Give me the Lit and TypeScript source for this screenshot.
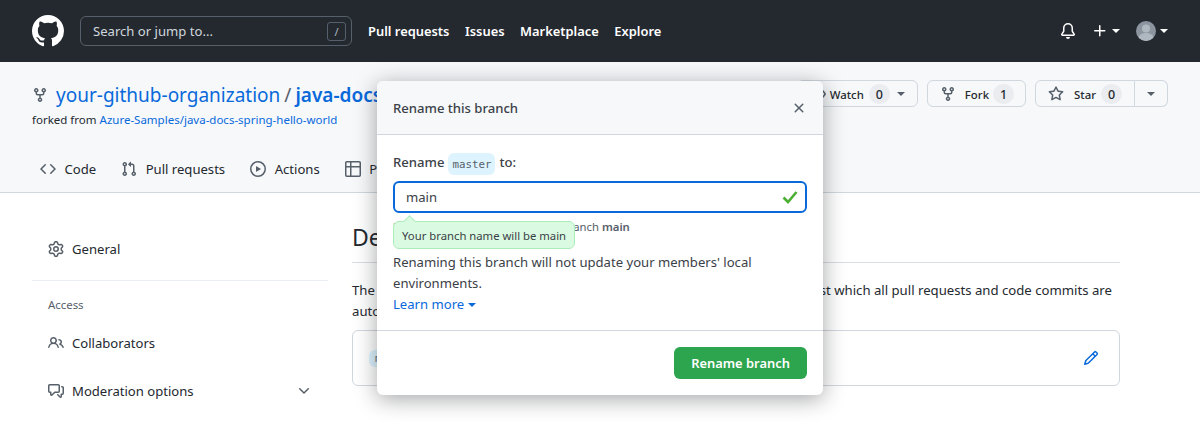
import { LitElement, html, css } from 'lit';
import { customElement } from 'lit/decorators.js';

const icons: Record<string, string> = {
  github: 'M8 0C3.58 0 0 3.58 0 8c0 3.54 2.29 6.53 5.47 7.59.4.07.55-.17.55-.38 0-.19-.01-.82-.01-1.49-2.01.37-2.53-.49-2.69-.94-.09-.23-.48-.94-.82-1.13-.28-.15-.68-.52-.01-.53.63-.01 1.08.58 1.23.82.72 1.21 1.87.87 2.33.66.07-.52.28-.87.51-1.07-1.78-.2-3.64-.89-3.64-3.95 0-.87.31-1.59.82-2.15-.08-.2-.36-1.02.08-2.12 0 0 .67-.21 2.2.82.64-.18 1.32-.27 2-.27.68 0 1.36.09 2 .27 1.53-1.04 2.2-.82 2.2-.82.44 1.1.16 1.92.08 2.12.51.56.82 1.27.82 2.15 0 3.07-1.87 3.75-3.65 3.95.29.25.54.73.54 1.48 0 1.07-.01 1.93-.01 2.2 0 .21.15.46.55.38A8.013 8.013 0 0016 8c0-4.42-3.58-8-8-8z',
  fork: 'M5 5.372v.878c0 .414.336.75.75.75h4.5a.75.75 0 0 0 .75-.75v-.878a2.25 2.25 0 1 1 1.5 0v.878a2.25 2.25 0 0 1-2.25 2.25h-1.5v2.128a2.251 2.251 0 1 1-1.5 0V8.5h-1.5A2.25 2.25 0 0 1 3.5 6.25v-.878a2.25 2.25 0 1 1 1.5 0ZM5 3.25a.75.75 0 1 0-1.5 0 .75.75 0 0 0 1.5 0Zm6.75.75a.75.75 0 1 0 0-1.5.75.75 0 0 0 0 1.5Zm-3 8.75a.75.75 0 1 0-1.5 0 .75.75 0 0 0 1.5 0Z',
  code: 'm11.28 3.22 4.25 4.25a.75.75 0 0 1 0 1.06l-4.25 4.25a.749.749 0 0 1-1.275-.326.749.749 0 0 1 .215-.734L13.94 8l-3.72-3.72a.749.749 0 0 1 .326-1.275.749.749 0 0 1 .734.215Zm-6.56 0a.751.751 0 0 1 1.042.018.751.751 0 0 1 .018 1.042L2.06 8l3.72 3.72a.749.749 0 0 1-.326 1.275.749.749 0 0 1-.734-.215L.47 8.53a.75.75 0 0 1 0-1.06Z',
  pull: 'M1.5 3.25a2.25 2.25 0 1 1 3 2.122v5.256a2.251 2.251 0 1 1-1.5 0V5.372A2.25 2.25 0 0 1 1.5 3.25Zm5.677-.177L9.573.677A.25.25 0 0 1 10 .854V2.5h1A2.5 2.5 0 0 1 13.5 5v5.628a2.251 2.251 0 1 1-1.5 0V5a1 1 0 0 0-1-1h-1v1.646a.25.25 0 0 1-.427.177L7.177 3.427a.25.25 0 0 1 0-.354ZM3.75 2.5a.75.75 0 1 0 0 1.5.75.75 0 0 0 0-1.5Zm0 9.5a.75.75 0 1 0 0 1.5.75.75 0 0 0 0-1.5Zm8.25.75a.75.75 0 1 0 1.5 0 .75.75 0 0 0-1.5 0Z',
  play: 'M8 0a8 8 0 1 1 0 16A8 8 0 0 1 8 0ZM1.5 8a6.5 6.5 0 1 0 13 0 6.5 6.5 0 0 0-13 0Zm4.879-2.773 4.264 2.559a.25.25 0 0 1 0 .428l-4.264 2.559A.25.25 0 0 1 6 10.559V5.442a.25.25 0 0 1 .379-.215Z',
  table: 'M0 1.75C0 .784.784 0 1.75 0h12.5C15.216 0 16 .784 16 1.75v12.5A1.75 1.75 0 0 1 14.25 16H1.75A1.75 1.75 0 0 1 0 14.25ZM6.5 6.5v8h7.75a.25.25 0 0 0 .25-.25V6.5Zm8-1.5V1.75a.25.25 0 0 0-.25-.25H6.5V5Zm-13 1.5v7.75c0 .138.112.25.25.25H5v-8ZM5 5V1.5H1.75a.25.25 0 0 0-.25.25V5Z',
  bell: 'M8 16a2 2 0 0 0 1.985-1.75c.017-.137-.097-.25-.235-.25h-3.5c-.138 0-.252.113-.235.25A2 2 0 0 0 8 16ZM3 5a5 5 0 0 1 10 0v2.947c0 .05.015.098.042.139l1.703 2.555A1.519 1.519 0 0 1 13.482 13H2.518a1.516 1.516 0 0 1-1.263-2.36l1.703-2.554A.255.255 0 0 0 3 7.947Zm5-3.5A3.5 3.5 0 0 0 4.5 5v2.947c0 .346-.102.683-.294.97l-1.703 2.556a.017.017 0 0 0-.003.01l.001.006c0 .002.002.004.004.006l.006.004.007.001h10.964l.007-.001.006-.004.004-.006.001-.007a.017.017 0 0 0-.003-.01l-1.703-2.554a1.745 1.745 0 0 1-.294-.97V5A3.5 3.5 0 0 0 8 1.5Z',
  plus: 'M7.75 2a.75.75 0 0 1 .75.75V7h4.25a.75.75 0 0 1 0 1.5H8.5v4.25a.75.75 0 0 1-1.5 0V8.5H2.75a.75.75 0 0 1 0-1.5H7V2.75A.75.75 0 0 1 7.75 2Z',
  star: 'M8 .25a.75.75 0 0 1 .673.418l1.882 3.815 4.21.612a.75.75 0 0 1 .416 1.279l-3.046 2.97.719 4.192a.751.751 0 0 1-1.088.791L8 12.347l-3.766 1.98a.75.75 0 0 1-1.088-.79l.72-4.194L.818 6.374a.75.75 0 0 1 .416-1.28l4.21-.611L7.327.668A.75.75 0 0 1 8 .25Zm0 2.445L6.615 5.5a.75.75 0 0 1-.564.41l-3.097.45 2.24 2.184a.75.75 0 0 1 .216.664l-.528 3.084 2.769-1.456a.75.75 0 0 1 .698 0l2.77 1.456-.53-3.084a.75.75 0 0 1 .216-.664l2.24-2.183-3.096-.45a.75.75 0 0 1-.564-.41L8 2.694Z',
  eye: 'M8 2c1.981 0 3.671.992 4.933 2.078 1.27 1.091 2.187 2.345 2.637 3.023a1.62 1.62 0 0 1 0 1.798c-.45.678-1.367 1.932-2.637 3.023C11.67 13.008 9.981 14 8 14c-1.981 0-3.671-.992-4.933-2.078C1.797 10.83.88 9.576.43 8.898a1.62 1.62 0 0 1 0-1.798c.45-.677 1.367-1.931 2.637-3.022C4.33 2.992 6.019 2 8 2ZM1.679 7.932a.12.12 0 0 0 0 .136c.411.622 1.241 1.75 2.366 2.717C5.176 11.758 6.527 12.5 8 12.5c1.473 0 2.825-.742 3.955-1.715 1.124-.967 1.954-2.096 2.366-2.717a.12.12 0 0 0 0-.136c-.412-.621-1.242-1.75-2.366-2.717C10.824 4.242 9.473 3.5 8 3.5c-1.473 0-2.825.742-3.955 1.715-1.124.967-1.954 2.096-2.366 2.717ZM8 10a2 2 0 1 1-.001-3.999A2 2 0 0 1 8 10Z',
  x: 'M3.72 3.72a.75.75 0 0 1 1.06 0L8 6.94l3.22-3.22a.749.749 0 0 1 1.275.326.749.749 0 0 1-.215.734L9.06 8l3.22 3.22a.749.749 0 0 1-.326 1.275.749.749 0 0 1-.734-.215L8 9.06l-3.22 3.22a.751.751 0 0 1-1.042-.018.751.751 0 0 1-.018-1.042L6.94 8 3.72 4.78a.75.75 0 0 1 0-1.06Z',
  gear: 'M8 0a8.2 8.2 0 0 1 .701.031C9.444.095 9.99.645 10.16 1.29l.288 1.107c.018.066.079.158.212.224.231.114.454.243.668.386.123.082.233.09.299.071l1.103-.303c.644-.176 1.392.021 1.82.63.27.385.506.792.704 1.218.315.675.111 1.422-.364 1.891l-.814.806c-.049.048-.098.147-.088.294.016.257.016.515 0 .772-.01.147.038.246.088.294l.814.806c.475.469.679 1.216.364 1.891a7.977 7.977 0 0 1-.704 1.217c-.428.61-1.176.807-1.82.63l-1.102-.302c-.067-.019-.177-.011-.3.071a5.909 5.909 0 0 1-.668.386c-.133.066-.194.158-.211.224l-.29 1.106c-.168.646-.715 1.196-1.458 1.26a8.006 8.006 0 0 1-1.402 0c-.743-.064-1.289-.614-1.458-1.26l-.289-1.106c-.018-.066-.079-.158-.212-.224a5.738 5.738 0 0 1-.668-.386c-.123-.082-.233-.09-.299-.071l-1.103.303c-.644.176-1.392-.021-1.82-.63a8.12 8.12 0 0 1-.704-1.218c-.315-.675-.111-1.422.363-1.891l.815-.806c.05-.048.098-.147.088-.294a6.214 6.214 0 0 1 0-.772c.01-.147-.038-.246-.088-.294l-.815-.806C.635 6.045.431 5.298.746 4.623a7.92 7.92 0 0 1 .704-1.217c.428-.61 1.176-.807 1.82-.63l1.102.302c.067.019.177.011.3-.071.214-.143.437-.272.668-.386.133-.066.194-.158.211-.224l.29-1.106C6.009.645 6.556.095 7.299.03 7.53.01 7.764 0 8 0Zm-.571 1.525c-.036.003-.108.036-.137.146l-.289 1.105c-.147.561-.549.967-.998 1.189-.173.086-.34.183-.5.29-.417.278-.97.423-1.529.27l-1.103-.303c-.109-.03-.175.016-.195.045-.22.312-.412.644-.573.99-.014.031-.021.11.059.19l.815.806c.411.406.562.957.53 1.456a4.709 4.709 0 0 0 0 .582c.032.499-.119 1.05-.53 1.456l-.815.806c-.081.08-.073.159-.059.19.162.346.353.677.573.989.02.03.085.076.195.046l1.102-.303c.56-.153 1.113-.008 1.53.27.161.107.328.204.501.29.447.222.85.629.997 1.189l.289 1.105c.029.109.101.143.137.146a6.6 6.6 0 0 0 1.142 0c.036-.003.108-.036.137-.146l.289-1.105c.147-.561.549-.967.998-1.189.173-.086.34-.183.5-.29.417-.278.97-.423 1.529-.27l1.103.303c.109.029.175-.016.195-.045.22-.313.411-.644.573-.99.014-.031.021-.11-.059-.19l-.815-.806c-.411-.406-.562-.957-.53-1.456a4.709 4.709 0 0 0 0-.582c-.032-.499.119-1.05.53-1.456l.815-.806c.081-.08.073-.159.059-.19a6.464 6.464 0 0 0-.573-.989c-.02-.03-.085-.076-.195-.046l-1.102.303c-.56.153-1.113.008-1.53-.27a4.44 4.44 0 0 0-.501-.29c-.447-.222-.85-.629-.997-1.189l-.289-1.105c-.029-.11-.101-.143-.137-.146a6.6 6.6 0 0 0-1.142 0ZM11 8a3 3 0 1 1-6 0 3 3 0 0 1 6 0ZM9.5 8a1.5 1.5 0 1 0-3.001.001A1.5 1.5 0 0 0 9.5 8Z',
  people: 'M2 5.5a3.5 3.5 0 1 1 5.898 2.549 5.508 5.508 0 0 1 3.034 4.084.75.75 0 1 1-1.482.235 4 4 0 0 0-7.9 0 .75.75 0 0 1-1.482-.236A5.507 5.507 0 0 1 3.102 8.05 3.493 3.493 0 0 1 2 5.5ZM11 4a3.001 3.001 0 0 1 2.22 5.018 5.01 5.01 0 0 1 2.56 3.012.749.749 0 0 1-.885.954.752.752 0 0 1-.549-.514 3.507 3.507 0 0 0-2.522-2.372.75.75 0 0 1-.574-.73v-.352a.75.75 0 0 1 .416-.672A1.5 1.5 0 0 0 11 5.5.75.75 0 0 1 11 4Zm-5.5-.5a2 2 0 1 0-.001 3.999A2 2 0 0 0 5.5 3.5Z',
  discussion: 'M1.75 1h8.5c.966 0 1.75.784 1.75 1.75v5.5A1.75 1.75 0 0 1 10.25 10H7.061l-2.574 2.573A1.458 1.458 0 0 1 2 11.543V10h-.25A1.75 1.75 0 0 1 0 8.25v-5.5C0 1.784.784 1 1.75 1ZM1.5 2.75v5.5c0 .138.112.25.25.25h1a.75.75 0 0 1 .75.75v2.19l2.72-2.72a.749.749 0 0 1 .53-.22h3.5a.25.25 0 0 0 .25-.25v-5.5a.25.25 0 0 0-.25-.25h-8.5a.25.25 0 0 0-.25.25Zm13 2a.25.25 0 0 0-.25-.25h-.5a.75.75 0 0 1 0-1.5h.5c.966 0 1.75.784 1.75 1.75v5.5A1.75 1.75 0 0 1 14.25 12H14v1.543a1.458 1.458 0 0 1-2.487 1.03L9.22 12.28a.749.749 0 0 1 .326-1.275.749.749 0 0 1 .734.215l2.22 2.22v-2.19a.75.75 0 0 1 .75-.75h1a.25.25 0 0 0 .25-.25Z',
  chevron: 'M12.78 5.22a.749.749 0 0 1 0 1.06l-4.25 4.25a.749.749 0 0 1-1.06 0L3.22 6.28a.749.749 0 1 1 1.06-1.06L8 8.939l3.72-3.72a.749.749 0 0 1 1.06 0Z',
  pencil: 'M11.013 1.427a1.75 1.75 0 0 1 2.474 0l1.086 1.086a1.75 1.75 0 0 1 0 2.474l-8.61 8.61c-.21.21-.47.364-.756.445l-3.251.93a.75.75 0 0 1-.927-.928l.929-3.25c.081-.286.235-.547.445-.758l8.61-8.61Zm.176 4.823L9.75 4.81l-6.286 6.287a.253.253 0 0 0-.064.108l-.558 1.953 1.953-.558a.253.253 0 0 0 .108-.064Zm1.238-3.763a.25.25 0 0 0-.354 0L10.811 3.75l1.439 1.44 1.263-1.263a.25.25 0 0 0 0-.354Z',
};

const icon = (name: string, size = 16) => html`<svg class="icon" viewBox="0 0 16 16" width=${size} height=${size} fill="currentColor"><path d=${icons[name]}></path></svg>`;

@customElement('app-root')
export class AppRoot extends LitElement {
  static styles = css`
    :host {
      display: block;
      position: relative;
      height: 422px;
      overflow: hidden;
      background: #fff;
      color: #24292f;
      font-family: "Noto Sans", "Open Sans", sans-serif;
      font-size: 13.1px;
    }
    .icon { flex: none; display: block; }
    a { color: #0969da; text-decoration: none; }
    .caret {
      display: inline-block;
      width: 0;
      height: 0;
      border: 4px solid transparent;
      border-top-color: currentColor;
      border-bottom: 0;
      flex: none;
    }

    /* top bar */
    .topbar {
      height: 62px;
      box-sizing: border-box;
      padding: 0 32px;
      display: flex;
      align-items: center;
      background: #24292f;
      color: #fff;
    }
    .search {
      width: 272px;
      height: 30px;
      box-sizing: border-box;
      margin-left: 16px;
      padding: 0 5px 0 12px;
      display: flex;
      align-items: center;
      justify-content: space-between;
      border: 1px solid #57606a;
      border-radius: 6px;
      color: #d0d7de;
    }
    .slash {
      width: 19px;
      height: 19px;
      box-sizing: border-box;
      border: 1px solid #57606a;
      border-radius: 3px;
      display: flex;
      align-items: center;
      justify-content: center;
      font-size: 11px;
      color: #afb8c1;
    }
    .topnav {
      display: flex;
      gap: 15.5px;
      margin-left: 16px;
      font-size: 12.9px;
      font-weight: 600;
      flex: 1;
    }
    .topright { display: flex; align-items: center; }
    .plus { margin-left: 16px; margin-right: 4px; }
    .avatar {
      width: 20px;
      height: 20px;
      margin-left: 16px;
      margin-right: 4px;
      border-radius: 50%;
      overflow: hidden;
      background: #8c959f;
    }

    /* repo header */
    .repohead {
      height: 131px;
      box-sizing: border-box;
      padding-top: 18px;
      background: #f6f8fa;
      border-bottom: 1px solid #d0d7de;
      display: flex;
      flex-direction: column;
    }
    .reporow {
      display: flex;
      justify-content: space-between;
      padding: 0 32px;
      height: 48px;
    }
    .repoinfo { padding-top: 1px; }
    .repotitle { display: flex; align-items: center; height: 27px; font-size: 19px; color: #57606a; }
    .repotitle .icon { margin-right: 8px; }
    .repotitle a { white-space: nowrap; }
    .sep { margin: 0 4px; }
    .repotitle b { font-weight: 600; }
    .forked { font-size: 11.5px; line-height: 18px; margin-top: 3px; white-space: nowrap; }
    .actions { display: flex; gap: 9px; }
    .btn {
      height: 27px;
      box-sizing: border-box;
      padding: 1px 12px 0;
      display: flex;
      align-items: center;
      border: 1px solid #d0d7de;
      border-radius: 6px;
      background: #f6f8fa;
      font-size: 11.4px;
      font-weight: 500;
    }
    .btn .icon { color: #57606a; margin-right: 9px; }
    .btn .caret { color: #57606a; margin-left: 7px; }
    .watch .icon { margin-right: 4px; }
    .star .icon { margin-right: 10px; }
    .fork { padding-right: 11px; }
    .fork .count { margin-left: 4px; }
    .count {
      min-width: 21px;
      height: 20px;
      margin-left: 5px;
      box-sizing: border-box;
      border-radius: 10px;
      background: #eaecef;
      display: flex;
      align-items: center;
      justify-content: center;
      font-size: 12.5px;
    }
    .split { display: flex; }
    .split .btn:first-child { border-radius: 6px 0 0 6px; }
    .split .btn:last-child { border-radius: 0 6px 6px 0; border-left: 0; padding: 0 12px; }
    .split .btn:last-child .caret { margin: 0; }
    .tabs {
      display: flex;
      gap: 25px;
      padding: 31px 40px 0;
      white-space: nowrap;
    }
    .tab { display: flex; align-items: center; gap: 8.5px; height: 20px; }
    .tab .icon { color: #57606a; }

    /* settings body */
    .body { display: flex; padding: 0 80px 0 32px; gap: 24px; }
    .side { width: 296px; flex: none; padding-top: 40px; }
    .sideitem {
      height: 32px;
      padding-left: 16px;
      padding-right: 16px;
      display: flex;
      align-items: center;
      gap: 8px;
    }
    .sideitem .icon { color: #57606a; }
    .sideitem .chev { margin-left: auto; }
    .sidediv { height: 1px; background: #eaeef2; margin: 15px 0 16px; }
    .sidehead { padding-left: 16px; font-size: 11.4px; line-height: 16px; color: #57606a; margin-bottom: 14px; }
    .mod { margin-top: 16px; }
    .content { flex: 1; min-width: 0; padding-top: 28px; }
    .content h2 {
      margin: 0;
      height: 41px;
      font-size: 23px;
      font-weight: 400;
      line-height: 32px;
      border-bottom: 1px solid #d8dee4;
      box-sizing: content-box;
    }
    .content p { margin: 17px 0 0; line-height: 21px; font-size: 13.17px; }
    .branchbox {
      margin-top: 8px;
      height: 56px;
      box-sizing: border-box;
      padding: 0 20px 0 16px;
      display: flex;
      align-items: center;
      justify-content: space-between;
      border: 1px solid #d0d7de;
      border-radius: 6px;
      color: #0969da;
    }
    .branchpill {
      padding: 2px 6px;
      border-radius: 6px;
      background: #ddf4ff;
      font-family: "DejaVu Sans Mono", monospace;
      font-size: 10.8px;
      color: #57606a;
    }

    /* rename dialog */
    .dialog {
      position: absolute;
      left: 377px;
      top: 81px;
      width: 446px;
      height: 314px;
      background: #fff;
      border-radius: 6px;
      box-shadow: 0 4px 22px rgba(27, 31, 36, 0.4);
      color: #3b4148;
      display: flex;
      flex-direction: column;
    }
    .dhead {
      height: 54px;
      box-sizing: border-box;
      padding: 0 16px;
      display: flex;
      align-items: center;
      justify-content: space-between;
      background: #f6f8fa;
      border-bottom: 1px solid #d0d7de;
      border-radius: 6px 6px 0 0;
      font-weight: 500;
    }
    .dhead .icon { color: #57606a; margin-right: 0; }
    .dbody { position: relative; flex: 1; padding: 18px 16px 0; }
    .renamelabel { display: flex; align-items: center; gap: 4px; height: 22px; font-weight: 500; }
    .renamelabel span { position: relative; top: -2px; }
    .renamelabel code {
      height: 22px;
      box-sizing: border-box;
      padding: 0 4px;
      display: flex;
      align-items: center;
      background: #ddf4ff;
      border-radius: 6px;
      font-family: "DejaVu Sans Mono", monospace;
      font-size: 10.8px;
      font-weight: 400;
      color: #57606a;
    }
    .field {
      margin-top: 6px;
      height: 32px;
      box-sizing: border-box;
      padding: 0 7px 0 11px;
      display: flex;
      align-items: center;
      justify-content: space-between;
      border: 2px solid #0969da;
      border-radius: 6px;
    }
    .tick { display: block; flex: none; }
    .note { margin-top: 6px; font-size: 11.3px; line-height: 16px; color: #57606a; white-space: nowrap; }
    .note b { font-weight: 600; }
    .tip {
      position: absolute;
      left: 16px;
      top: 86px;
      height: 28px;
      box-sizing: border-box;
      padding: 0 8px;
      display: flex;
      align-items: center;
      background: #dafbe1;
      border: 1px solid #aceebb;
      border-radius: 6px;
      font-size: 11.3px;
      white-space: nowrap;
    }
    .tip::before {
      content: "";
      position: absolute;
      left: 11px;
      top: -5px;
      width: 8px;
      height: 8px;
      background: #dafbe1;
      transform: rotate(45deg);
      border-top: 1px solid #aceebb;
      border-left: 1px solid #aceebb;
    }
    .warn { margin: 17px 0 0; line-height: 21px; }
    .learn { display: flex; align-items: center; gap: 4px; line-height: 21px; }
    .dfoot {
      height: 65px;
      box-sizing: border-box;
      padding: 16px;
      display: flex;
      justify-content: flex-end;
      border-top: 1px solid #d0d7de;
    }
    .primary {
      width: 133px;
      height: 32px;
      display: flex;
      align-items: center;
      justify-content: center;
      background: #2da44e;
      color: #fff;
      border-radius: 6px;
      font-size: 12.9px;
      font-weight: 600;
    }
  `;

  render() {
    return html`
      <header class="topbar">
        <svg class="icon" viewBox="0 0 16 16" width="32" height="32" fill="currentColor"><path d=${icons.github}></path></svg>
        <div class="search"><span>Search or jump to...</span><span class="slash">/</span></div>
        <nav class="topnav"><span>Pull requests</span><span>Issues</span><span>Marketplace</span><span>Explore</span></nav>
        <div class="topright">
          ${icon('bell')}
          <span class="plus">${icon('plus')}</span>
          <span class="caret"></span>
          <span class="avatar">
            <svg viewBox="0 0 20 20" width="20" height="20"><circle cx="10" cy="7.5" r="4" fill="#afb8c1"></circle><ellipse cx="10" cy="17" rx="7.5" ry="5" fill="#afb8c1"></ellipse></svg>
          </span>
          <span class="caret"></span>
        </div>
      </header>

      <section class="repohead">
        <div class="reporow">
          <div class="repoinfo">
            <div class="repotitle">${icon('fork')}<a>your-github-organization</a><span class="sep">/</span><a><b>java-docs-spring-hello-world</b></a></div>
            <div class="forked">forked from <a>Azure-Samples/java-docs-spring-hello-world</a></div>
          </div>
          <div class="actions">
            <div class="btn watch">${icon('eye')}Watch<span class="count">0</span><span class="caret"></span></div>
            <div class="btn fork">${icon('fork')}Fork<span class="count">1</span></div>
            <div class="split">
              <div class="btn star">${icon('star')}Star<span class="count">0</span></div>
              <div class="btn"><span class="caret"></span></div>
            </div>
          </div>
        </div>
        <nav class="tabs">
          <span class="tab">${icon('code')}Code</span>
          <span class="tab">${icon('pull')}Pull requests</span>
          <span class="tab">${icon('play')}Actions</span>
          <span class="tab">${icon('table')}Projects</span>
        </nav>
      </section>

      <div class="body">
        <aside class="side">
          <div class="sideitem">${icon('gear')}General</div>
          <div class="sidediv"></div>
          <div class="sidehead">Access</div>
          <div class="sideitem">${icon('people')}Collaborators</div>
          <div class="sideitem mod">${icon('discussion')}Moderation options<span class="chev">${icon('chevron')}</span></div>
        </aside>
        <main class="content">
          <h2>Default branch</h2>
          <p>The default branch is considered the “base” branch in your repository, against which all pull requests and code commits are automatically made, unless you specify a different branch.</p>
          <div class="branchbox"><span class="branchpill">main</span>${icon('pencil')}</div>
        </main>
      </div>

      <div class="dialog">
        <div class="dhead"><span>Rename this branch</span>${icon('x')}</div>
        <div class="dbody">
          <div class="renamelabel"><span>Rename</span> <code>master</code> <span>to:</span></div>
          <div class="field">
            <span>main</span>
            <svg class="tick" viewBox="0 0 16 14" width="16" height="14"><path d="M1.5 7.5 L6 12 L14.5 2" fill="none" stroke="#4cae33" stroke-width="2.6"></path></svg>
          </div>
          <div class="note">Most projects name the default branch <b>main</b></div>
          <div class="tip">Your branch name will be main</div>
          <p class="warn">Renaming this branch will not update your members' local environments.</p>
          <a class="learn">Learn more <span class="caret"></span></a>
        </div>
        <div class="dfoot"><div class="primary">Rename branch</div></div>
      </div>
    `;
  }
}
